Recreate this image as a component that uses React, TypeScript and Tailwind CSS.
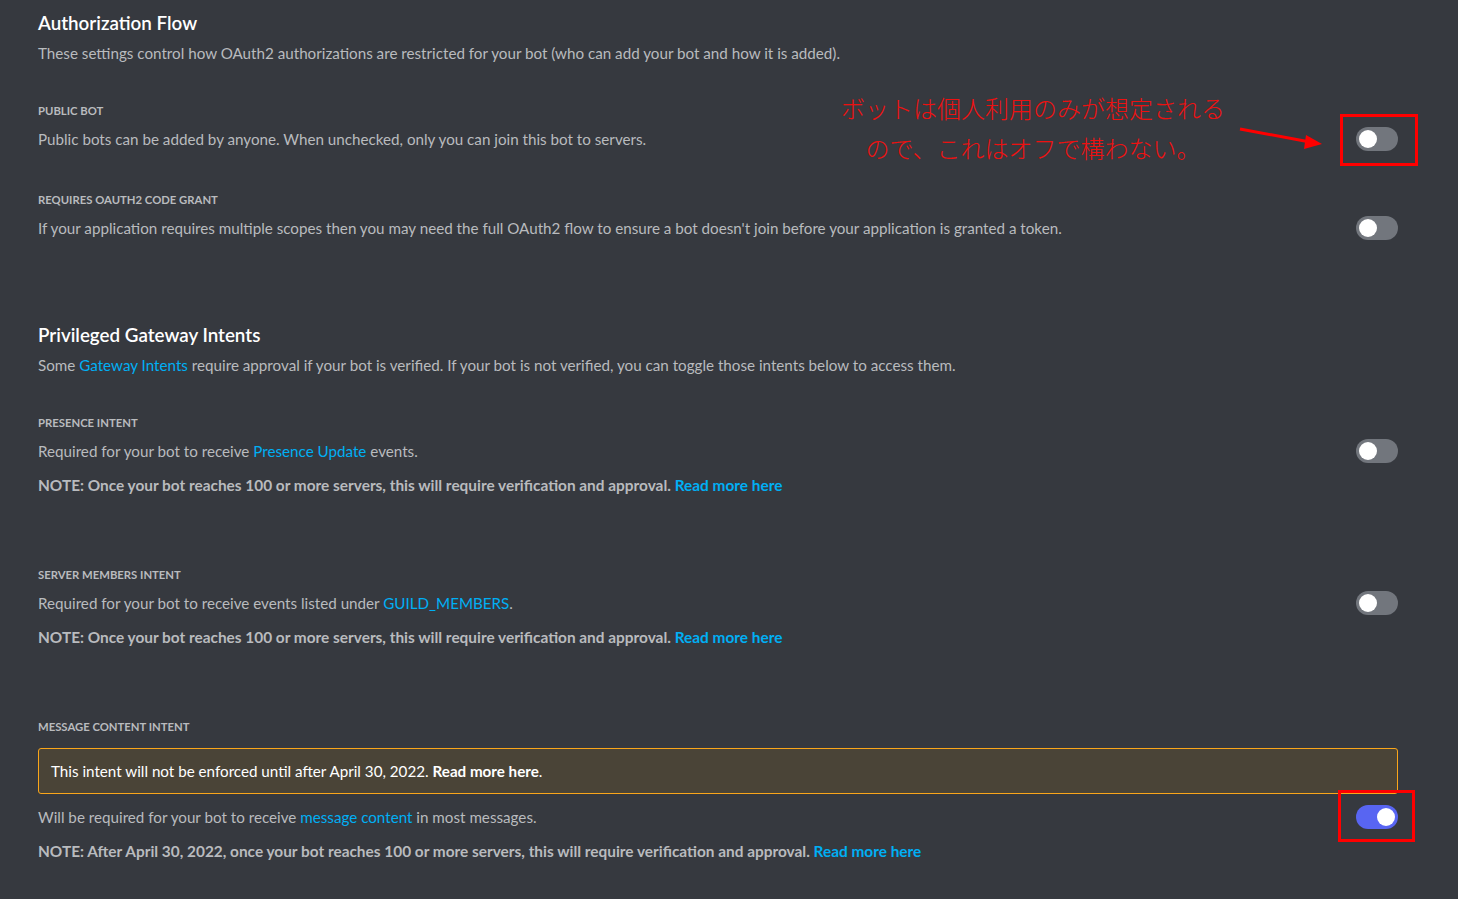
import React from "react";

const Toggle = ({ on = false }: { on?: boolean }) => (
  <div
    className={`w-[42px] h-6 rounded-full flex items-center px-[3px] shrink-0 ${
      on ? "bg-[#5865f2] justify-end" : "bg-[#72767d] justify-start"
    }`}
  >
    <div className="w-[18px] h-[18px] rounded-full bg-white" />
  </div>
);

const Link = ({ children, bold = false }: { children: React.ReactNode; bold?: boolean }) => (
  <a className={`text-[#00aff4] ${bold ? "font-bold" : ""}`}>{children}</a>
);

const Label = ({ children, mt }: { children: React.ReactNode; mt: string }) => (
  <div className={`${mt} text-[11.3px] leading-4 font-bold uppercase text-[#b9bbbe]`}>{children}</div>
);

const Row = ({
  children,
  mt,
  toggle,
}: {
  children: React.ReactNode;
  mt: string;
  toggle: React.ReactNode;
}) => (
  <div className={`${mt} h-5 flex items-center justify-between`}>
    <div className="text-[15.2px] leading-5 text-[#b9bbbe]">{children}</div>
    {toggle}
  </div>
);

const Note = ({ children }: { children: React.ReactNode }) => (
  <div className="mt-[14px] text-[15.4px] leading-5 font-bold text-[#b9bbbe]">{children}</div>
);

export default function App() {
  return (
    <div
      className="min-h-[899px] bg-[#36393f] pl-[38px] pr-[60px] pt-[11px] pb-10"
      style={{ fontFamily: 'Lato, "Noto Sans CJK JP", sans-serif' }}
    >
      <div className="relative">
        <h2 className="text-[18.8px] leading-6 font-semibold text-white">Authorization Flow</h2>
        <p className="mt-2 text-[15.2px] leading-5 text-[#b9bbbe]">
          These settings control how OAuth2 authorizations are restricted for your bot (who can add your bot and how it is added).
        </p>

        <Label mt="mt-10">Public bot</Label>
        <Row
          mt="mt-[10px]"
          toggle={
            <div className="relative">
              <Toggle />
              <div className="absolute -left-4 -right-5 -top-[13px] -bottom-[15px] border-[3px] border-[#ff0000]" />
            </div>
          }
        >
          Public bots can be added by anyone. When unchecked, only you can join this bot to servers.
        </Row>

        {/* annotation */}
        <div
          className="absolute left-[796px] top-[77px] w-[398px] text-center text-[24px] leading-[40px] font-light text-[#ee1111]"
          style={{ fontFamily: '"Noto Sans CJK JP", sans-serif' }}
        >
          <div>ボットは個人利用のみが想定される</div>
          <div>ので、これはオフで構わない。</div>
        </div>
        <svg className="absolute left-[1198px] top-[108px]" width="90" height="30" viewBox="0 0 90 30">
          <line x1="4" y1="10" x2="74" y2="23" stroke="#ff0000" strokeWidth="3" />
          <polygon points="86,25 70,16 68,30" fill="#ff0000" />
        </svg>

        <Label mt="mt-[43px]">Requires OAuth2 code grant</Label>
        <Row mt="mt-[10px]" toggle={<Toggle />}>
          If your application requires multiple scopes then you may need the full OAuth2 flow to ensure a bot doesn't join before your application is granted a token.
        </Row>

        <h2 className="mt-[85px] text-[18.8px] leading-6 font-semibold text-white">Privileged Gateway Intents</h2>
        <p className="mt-2 text-[15.2px] leading-5 text-[#b9bbbe]">
          Some <Link>Gateway Intents</Link> require approval if your bot is verified. If your bot is not verified, you can toggle those intents below to access them.
        </p>

        <Label mt="mt-10">Presence intent</Label>
        <Row mt="mt-[10px]" toggle={<Toggle />}>
          Required for your bot to receive <Link>Presence Update</Link> events.
        </Row>
        <Note>
          NOTE: Once your bot reaches 100 or more servers, this will require verification and approval. <Link bold>Read more here</Link>
        </Note>

        <Label mt="mt-[72px]">Server members intent</Label>
        <Row mt="mt-[10px]" toggle={<Toggle />}>
          Required for your bot to receive events listed under <Link>GUILD_MEMBERS</Link>.
        </Row>
        <Note>
          NOTE: Once your bot reaches 100 or more servers, this will require verification and approval. <Link bold>Read more here</Link>
        </Note>

        <Label mt="mt-[72px]">Message content intent</Label>
        <div className="mt-[13px] h-[46px] flex items-center px-3 rounded-[3px] border border-[#faa61a] bg-[#4a4437] text-[15.2px] text-white">
          This intent will not be enforced until after April 30, 2022.&nbsp;<span className="font-bold">Read more here</span>.
        </div>
        <Row
          mt="mt-[13px]"
          toggle={
            <div className="relative">
              <Toggle on />
              <div className="absolute -left-[18px] -right-[17px] -top-[15px] -bottom-[13px] border-[3px] border-[#ff0000]" />
            </div>
          }
        >
          Will be required for your bot to receive <Link>message content</Link> in most messages.
        </Row>
        <Note>
          NOTE: After April 30, 2022, once your bot reaches 100 or more servers, this will require verification and approval. <Link bold>Read more here</Link>
        </Note>
      </div>
    </div>
  );
}
